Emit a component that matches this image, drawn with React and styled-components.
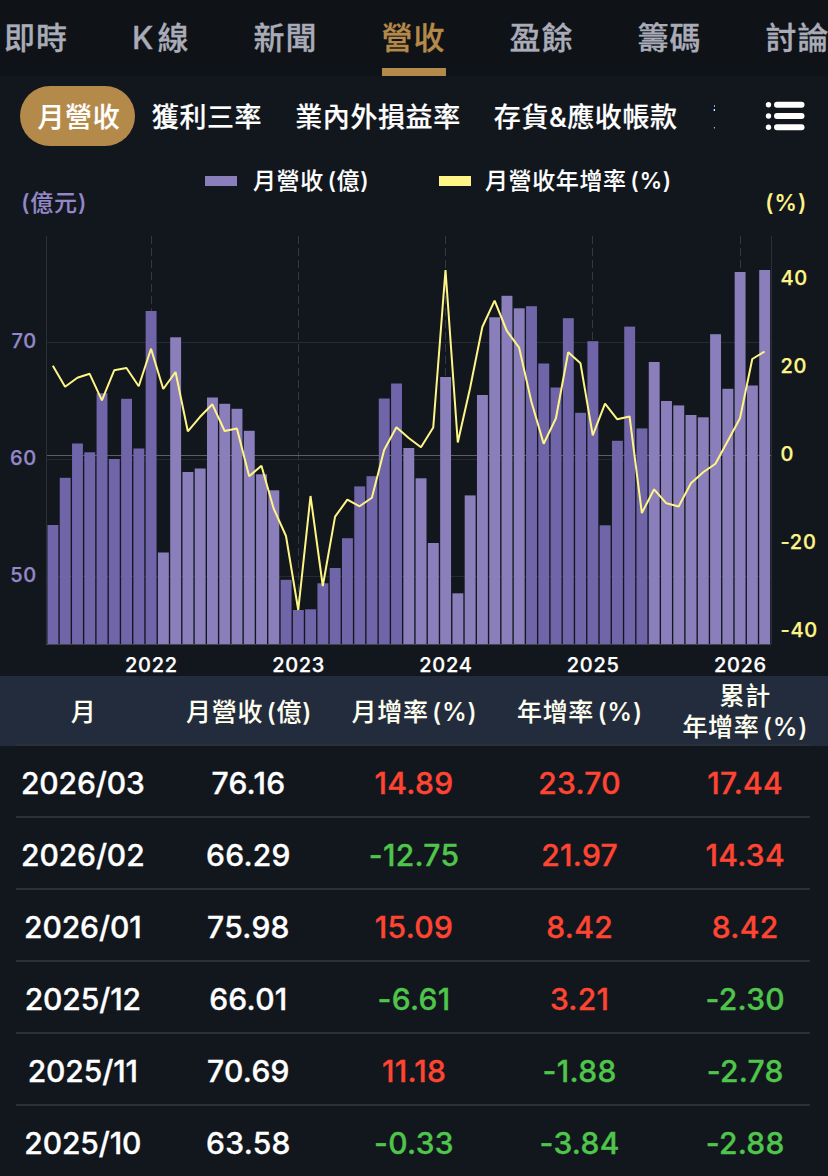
import React from 'react';
import styled, { createGlobalStyle } from 'styled-components';

const GlobalStyle = createGlobalStyle`
  body {
    margin: 0;
    background: #12171e;
    overflow: hidden;
  }
`;

const Page = styled.div`
  width: 828px;
  height: 1176px;
  overflow: hidden;
  color: #ffffff;
  background: #12171e;
  font-family: Inter, 'Noto Sans CJK TC', sans-serif;
  font-weight: 500;
  -webkit-text-stroke: 0.35px currentColor;
`;

// Top level tabs
const Tabs = styled.nav`
  display: flex;
  gap: 64px;
  height: 76px;
  padding-left: 4px;
  background: #0f1317;
  overflow: hidden;
`;

const Tab = styled.div`
  flex: none;
  box-sizing: border-box;
  height: 76px;
  font-size: 31px;
  line-height: 76px;
  letter-spacing: 1px;
  word-spacing: -6px;
  white-space: nowrap;
  -webkit-text-stroke-width: 0.3px;
  color: ${(props) => (props.$active ? '#b48a4a' : '#a9acb8')};
  border-bottom: ${(props) => (props.$active ? '8px solid #b48a4a' : 'none')};
`;

// Second row with the scrolling categories
const SubBar = styled.div`
  display: flex;
  align-items: center;
  height: 80px;
  padding: 0 23px 0 20px;
`;

const SubTabs = styled.div`
  display: flex;
  align-items: center;
  width: 695px;
  overflow: hidden;
`;

const SubTab = styled.div`
  flex: none;
  box-sizing: border-box;
  height: 60px;
  padding: 2px ${(props) => (props.$active ? '15px 0 17.5px' : '16.5px 0')};
  border-radius: 30px;
  font-size: 27px;
  line-height: 60px;
  letter-spacing: 0.6px;
  white-space: nowrap;
  -webkit-text-stroke-width: 0.2px;
  background: ${(props) => (props.$active ? '#b48a4a' : 'transparent')};

  &:last-child {
    margin-left: 2px;
  }
`;

const ListIcon = styled.svg`
  display: block;
  width: 40px;
  height: 30px;
  margin-left: auto;
`;

const Chart = styled.svg`
  display: block;
  width: 828px;
  height: 520px;
  -webkit-text-stroke-width: 0;
`;

const Label = styled.text`
  font-size: ${(props) => props.$size || 20}px;
  letter-spacing: ${(props) => props.$spacing || 0}px;
  word-spacing: -3px;
  fill: ${(props) => props.$color || '#ffffff'};
  stroke: ${(props) => props.$color || '#ffffff'};
  stroke-width: ${(props) => (props.$size ? 0.1 : 0.25)}px;
`;

const TableHead = styled.div`
  height: 70px;
  background: #232c3d;
  color: #fffff0;
  font-size: 25px;
  line-height: 31px;
  letter-spacing: 0.7px;
  word-spacing: -4px;
  text-align: center;
  -webkit-text-stroke-width: 0.1px;
`;

const HeadRow = styled.div`
  display: grid;
  grid-template-columns: repeat(5, 1fr);
  align-items: center;
  box-sizing: border-box;
  height: 68px;
  padding-top: 4px;
  padding-left: 1px;
`;

const HeadCell = styled.div`
  white-space: pre-line;
`;

const Row = styled.div`
  display: grid;
  grid-template-columns: repeat(5, 1fr);
  height: 70px;
  line-height: 74px;
  font-size: 30px;
  letter-spacing: 0.3px;
  text-align: center;
`;

const Divider = styled.div`
  height: 2px;
  margin: 0 18px 0 16px;
  background: #2b2f38;
`;

const Cell = styled.div`
  color: ${(props) => props.$color || '#ffffff'};

  &:first-child {
    letter-spacing: -0.1px;
  }
`;

const RED = '#ff4532';
const GREEN = '#4fc64b';
const PURPLE = '#9488c8';
const YELLOW = '#fff587';

const tabs = ['即時', 'K 線', '新聞', '營收', '盈餘', '籌碼', '討論'];
const subTabs = ['月營收', '獲利三率', '業內外損益率', '存貨&應收帳款', '資產負債'];
const heads = ['月', '月營收 (億)', '月增率 (%)', '年增率 (%)', '累計\n年增率 (%)'];

const rows = [
  ['2026/03', '76.16', '14.89', '23.70', '17.44'],
  ['2026/02', '66.29', '-12.75', '21.97', '14.34'],
  ['2026/01', '75.98', '15.09', '8.42', '8.42'],
  ['2025/12', '66.01', '-6.61', '3.21', '-2.30'],
  ['2025/11', '70.69', '11.18', '-1.88', '-2.78'],
  ['2025/10', '63.58', '-0.33', '-3.84', '-2.88'],
];

// Tops of the monthly bars, 2021/05 to 2026/03
const barTops = [
  525, 477.8, 443.5, 452.3, 393.3, 459, 398.8, 448.5, 311, 552.5,
  337.3, 472, 468.5, 397.5, 403.8, 408.8, 430.8, 474.3, 490.3,
  579.8, 610, 609.3, 583.3, 568, 538.2, 486.4, 476.2, 398.5, 383.5,
  448, 478.3, 543, 377, 593.3, 495.4, 395, 317.3, 295.8, 308.3,
  306.2, 363.5, 387.5, 318.2, 412.8, 341.2, 525.3, 440.8, 326.6, 428.4,
  362, 401, 405.4, 415, 417.3, 334.2, 388.8, 272, 385.5, 270,
];

// Year over year growth line
const linePoints = [
  365.8, 386.8, 377.7, 373.8, 400.3, 370.3, 368, 386.3, 348.7, 389,
  372, 431.3, 416.8, 404.3, 431, 428.5, 476.3, 465.7, 508.7, 536,
  610, 496, 586, 516.7, 499.7, 506.3, 497.7, 450, 427.3, 438,
  447.3, 427.5, 270, 442.5, 388.3, 327, 300.7, 331, 347.7, 401.7,
  443.7, 418.3, 352.3, 363.3, 435.3, 403.7, 419.3, 416.5, 513, 489.3,
  503.3, 506.5, 483.3, 472.3, 463.7, 441, 418.3, 359, 351.5,
];

const centerX = (i) => 46.7 + 12.271 * (i + 0.5);
const isDark = (i) => i < 9 || (i > 18 && i < 29) || (i > 38 && i < 49);

const years = [
  { label: '2022', index: 8 },
  { label: '2023', index: 20 },
  { label: '2024', index: 32 },
  { label: '2025', index: 44 },
  { label: '2026', index: 56 },
];

const valueColor = (value, column) => {
  if (column < 2) return '#ffffff';
  return value.startsWith('-') ? GREEN : RED;
};

const RevenueChart = () => (
  <Chart viewBox="0 156 828 520">
    <rect x="205" y="176" width="32" height="10" fill="#8b7fbb" />
    <Label x="253" y="189" $size={23} $spacing={0.6}>月營收 (億)</Label>
    <rect x="439" y="176" width="32" height="10" fill={YELLOW} />
    <Label x="485" y="189" $size={23} $spacing={0.6}>月營收年增率 (%)</Label>
    <Label x="21" y="211" $size={23} $spacing={0.8} $color={PURPLE}>(億元)</Label>
    <Label x="765" y="211" $size={23} $spacing={0.8} $color={YELLOW}>(%)</Label>

    {/* Grid */}
    <g fill="none" strokeWidth="1">
      <path d="M47 342.5H771M47 459.5H771M47 576.5H771" stroke="#262a31" />
      <path d="M46.5 236V644M771.5 236V644" stroke="#2b2f36" />
      {years.map(({ label, index }) => (
        <path
          key={label}
          d={`M${Math.floor(centerX(index)) + 0.5} 236V644`}
          stroke="#35383e"
          strokeDasharray="8 4"
        />
      ))}
      <path d="M47 455.5H771" stroke="#5c5e63" />
    </g>

    {barTops.map((top, i) => (
      <rect
        key={i}
        x={centerX(i) - 5.35}
        y={top}
        width="10.9"
        height={644 - top}
        fill={isDark(i) ? '#7165aa' : '#8b7fbb'}
      />
    ))}
    <path d="M46 644.5H771" stroke="#45464d" />
    <polyline
      points={linePoints.map((y, i) => `${centerX(i)},${y}`).join(' ')}
      fill="none"
      stroke={YELLOW}
      strokeWidth="2"
      strokeLinejoin="bevel"
    />

    {/* Axis labels */}
    {[70, 60, 50].map((value, i) => (
      <Label key={value} x="37" y={347.5 + i * 117.3} textAnchor="end" $spacing={0.8} $color={PURPLE}>{value}</Label>
    ))}
    {[40, 20, 0, -20, -40].map((value, i) => (
      <Label key={value} x="780.5" y={285 + i * 88} $spacing={0.7} $color={YELLOW}>{value}</Label>
    ))}
    {years.map(({ label, index }) => (
      <Label key={label} x={centerX(index) + 0.4} y="672" textAnchor="middle" $spacing={0.7}>{label}</Label>
    ))}
  </Chart>
);

const App = () => {
  return (
    <Page>
      <GlobalStyle />
      <Tabs>
        {tabs.map((name) => (
          <Tab key={name} $active={name === '營收'}>{name}</Tab>
        ))}
      </Tabs>

      <SubBar>
        <SubTabs>
          {subTabs.map((name, i) => (
            <SubTab key={name} $active={i === 0}>{name}</SubTab>
          ))}
        </SubTabs>
        <ListIcon viewBox="0 0 40 30" fill="#ffffff">
          {[3.8, 15, 26.2].map((y) => (
            <g key={y}>
              <circle cx="3.5" cy={y} r="2.7" />
              <rect x="9" y={y - 3} width="30.5" height="6" rx="3" />
            </g>
          ))}
        </ListIcon>
      </SubBar>

      <RevenueChart />

      <TableHead>
        <HeadRow>
          {heads.map((head) => (
            <HeadCell key={head}>{head}</HeadCell>
          ))}
        </HeadRow>
        <Divider />
      </TableHead>
      {rows.map((row) => (
        <div key={row[0]}>
          <Row>
            {row.map((value, i) => (
              <Cell key={i} $color={valueColor(value, i)}>{value}</Cell>
            ))}
          </Row>
          <Divider />
        </div>
      ))}
    </Page>
  );
}

export default App;
